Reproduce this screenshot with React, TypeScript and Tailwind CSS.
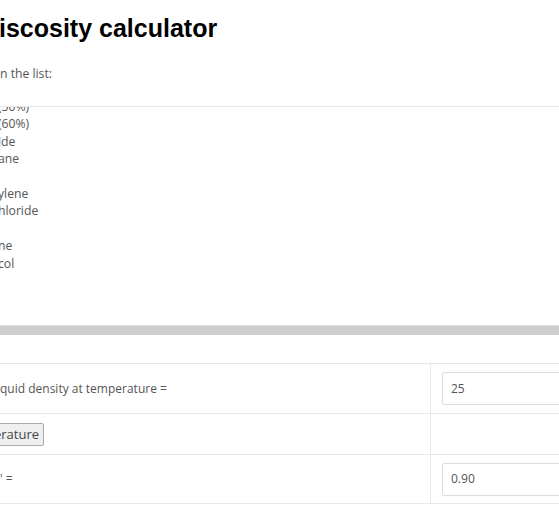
import React from "react";

const liquids = ["(50%)", "(60%)", "ide", "ane", "", "ylene", "hloride", "", "ne", "col", "", ""];

const rows = [
  { label: "quid density at temperature =", value: "25", h: "h-[49px]" },
  { label: "", value: null, h: "h-[40px]" },
  { label: "' =", value: "0.90", h: "h-[48px]" },
];

export default function App() {
  return (
    <div className="w-[559px] h-[520px] overflow-hidden bg-white text-[#555] [font-family:'Open_Sans',sans-serif]">
      <h1 className="pt-[14px] ml-[-1px] h-[44px] text-[25px] leading-[28px] font-bold text-black [font-family:'Liberation_Sans',Arial,sans-serif] whitespace-nowrap">
        iscosity calculator
      </h1>
      <p className="mt-[21px] text-[12.2px] leading-[17px] whitespace-nowrap">n the list:</p>

      <div className="mt-[24px] h-[219px] overflow-hidden border-t border-[#e6e6e6]">
        <div className="mt-[-9px] ml-[-2px] text-[12.2px] leading-[17.4px] whitespace-nowrap">
          {liquids.map((l, i) => (
            <div key={i} className="h-[17.4px]">
              {l}
            </div>
          ))}
        </div>
      </div>
      <div className="h-[10px] border-t border-[#e2e2e2] bg-[#cdcdcd]" />

      <div className="mt-[28px] border-b border-[#e8e8e8] text-[12px]">
        {rows.map((r, i) => (
          <div key={i} className="grid grid-cols-[430px_1fr] border-t border-[#e8e8e8]">
            <div className={`${r.h} flex items-center whitespace-nowrap`}>
              {i === 1 ? (
                <button className="ml-[-12px] h-[23px] pl-[5px] pr-[4px] rounded-[2px] border border-[#a9a9a9] bg-[#efefef] text-[13px] text-[#444] leading-none">
                  erature
                </button>
              ) : (
                r.label
              )}
            </div>
            <div className="flex items-center border-l border-[#e8e8e8] pl-[11px]">
              {r.value && (
                <div className="h-[33px] w-[200px] flex items-center rounded-[2px] border border-[#dcdcdc] pl-[8px] text-[#555]">
                  {r.value}
                </div>
              )}
            </div>
          </div>
        ))}
      </div>
    </div>
  );
}
